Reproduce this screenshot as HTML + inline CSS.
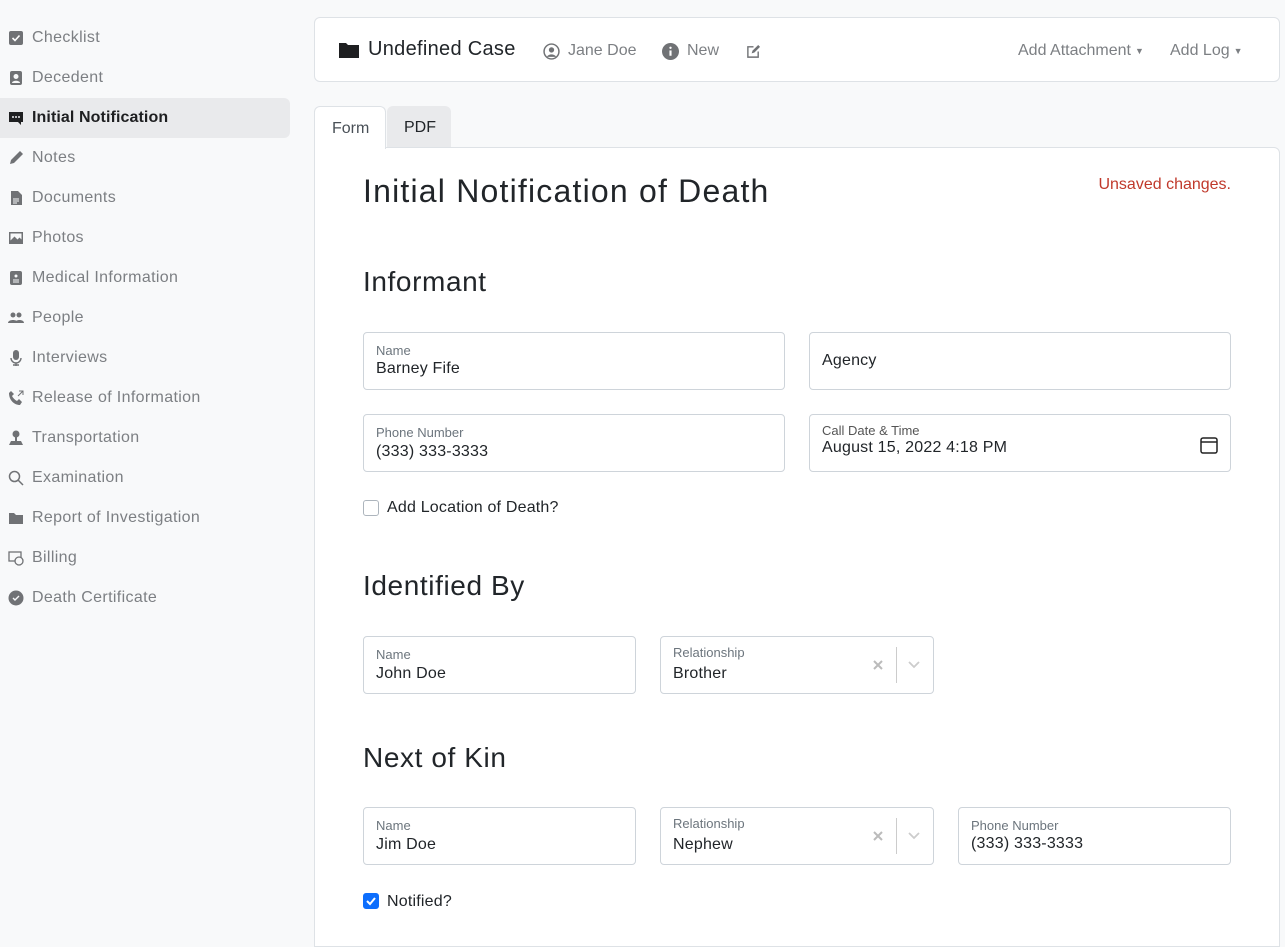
<!DOCTYPE html>
<html><head><style>
*{box-sizing:border-box;margin:0;padding:0}
body{width:1285px;height:930px;overflow:hidden;background:#f8f9fa;font-family:"Liberation Sans",sans-serif;position:relative;color:#212529}
.side{position:absolute;left:0;top:18px;width:290px}
.it{height:40px;display:flex;align-items:center;padding-left:8px;font-size:16px;color:#7c7f83;border-radius:0 6px 6px 0;letter-spacing:0.35px}
.it.act{background:#e9eaec;color:#1e1f21;font-weight:bold;letter-spacing:0.1px}
.ic{width:16px;min-width:16px;height:16px;margin-right:8px;display:block;position:relative}
.ic svg{position:absolute;left:0;top:0;width:16px;height:16px;fill:#707275}
.act .ic svg{fill:#1e1f21}
.hdr{position:absolute;left:314px;top:17px;width:966px;height:65px;background:#fff;border:1px solid #dee2e6;border-radius:6px}
.hdr .t{position:absolute;left:24px;top:20px;font-size:20px;display:flex;align-items:center;letter-spacing:0.3px}
.g{position:absolute;top:24px;font-size:16px;color:#7c7f83;display:flex;align-items:center}
.tab{position:absolute;top:106px;height:42px;font-size:16px;padding:13px 17px;border-radius:6px 6px 0 0}
.card{position:absolute;left:314px;top:147px;width:966px;height:800px;background:#fff;border:1px solid #dee2e6;border-radius:0 6px 0 0}
.a{position:absolute}
h1{position:absolute;left:48px;top:25px;font-size:32px;font-weight:normal;letter-spacing:1.2px}
h2{position:absolute;left:48px;font-size:28px;font-weight:normal;letter-spacing:0.6px}
.f{position:absolute;height:58px;border:1px solid #ced4da;border-radius:4px;background:#fff}
.f .l{position:absolute;left:12px;top:10px;font-size:13px;color:#6c757d}
.f .v{position:absolute;left:12px;top:28px;font-size:16px;color:#212529;letter-spacing:0.2px}
.cb{position:absolute;left:48px;width:16px;height:16px;border:1px solid #adb5bd;border-radius:3px;background:#fff}
.cl{position:absolute;left:72px;font-size:16px;letter-spacing:0.2px}
.chev{position:absolute;left:247px;top:24px}
</style></head><body>
<div class="side">
<div class="it"><span class="ic"><svg viewBox="0 0 16 16"><rect x="1" y="1" width="14" height="14" rx="2"/><path d="M4.5 8l2.5 2.5 4.5-5" stroke="#fff" stroke-width="1.6" fill="none"/></svg></span>Checklist</div>
<div class="it"><span class="ic"><svg viewBox="0 0 16 16"><rect x="2" y="1" width="12" height="14" rx="2"/><circle cx="8" cy="6.5" r="2.5" fill="#f8f9fa"/><path d="M4 13c0-3 8-3 8 0z" fill="#f8f9fa"/></svg></span>Decedent</div>
<div class="it act"><span class="ic"><svg viewBox="0 0 16 16"><path d="M1 2h14v10h-2v3l-3-3H1z"/><circle cx="5" cy="7" r="1" fill="#e9eaec"/><circle cx="8" cy="7" r="1" fill="#e9eaec"/><circle cx="11" cy="7" r="1" fill="#e9eaec"/></svg></span>Initial Notification</div>
<div class="it"><span class="ic"><svg viewBox="0 0 16 16"><path d="M12 1l3 3-9 9-4 1 1-4z"/></svg></span>Notes</div>
<div class="it"><span class="ic"><svg viewBox="0 0 16 16"><path d="M3 1h7l4 4v10H3z"/><path d="M5 9h6M5 11h6M5 13h4" stroke="#f8f9fa"/></svg></span>Documents</div>
<div class="it"><span class="ic"><svg viewBox="0 0 16 16"><path d="M1 2h14v12H1z M2.5 3.5v7l4-4 3 3 2-2 2 2v-6z" fill-rule="evenodd"/></svg></span>Photos</div>
<div class="it"><span class="ic"><svg viewBox="0 0 16 16"><rect x="2" y="1" width="12" height="14" rx="2"/><path d="M5 10h6M5 12h6" stroke="#f8f9fa"/><circle cx="8" cy="6" r="1.5" fill="#f8f9fa"/></svg></span>Medical Information</div>
<div class="it"><span class="ic"><svg viewBox="0 0 16 16"><circle cx="5" cy="5" r="2.5"/><circle cx="11" cy="5" r="2.5"/><path d="M0 13c0-4 10-4 10 0zM7 13c0-4 9-4 9 0z"/></svg></span>People</div>
<div class="it"><span class="ic"><svg viewBox="0 0 16 16"><rect x="5" y="0" width="6" height="10" rx="3"/><path d="M3 8a5 5 0 0010 0M8 13v3M5 15h6" stroke="#707275" fill="none" stroke-width="1.4"/></svg></span>Interviews</div>
<div class="it"><span class="ic"><svg viewBox="0 0 16 16"><path d="M3 1l3 3-2 2c1 2 3 4 5 5l2-2 3 3-2 3C6 15 1 10 1 3z"/><path d="M10 6l5-5M11 1h4v4" stroke="#707275" fill="none"/></svg></span>Release of Information</div>
<div class="it"><span class="ic"><svg viewBox="0 0 16 16"><circle cx="8" cy="4" r="3.5"/><path d="M7 7h2v5H7zM1 15l2-4h10l2 4z" /></svg></span>Transportation</div>
<div class="it"><span class="ic"><svg viewBox="0 0 16 16"><circle cx="6.5" cy="6.5" r="5" stroke="#707275" stroke-width="1.5" fill="none"/><path d="M10 10l5 5" stroke="#707275" stroke-width="1.5"/></svg></span>Examination</div>
<div class="it"><span class="ic"><svg viewBox="0 0 16 16"><path d="M1 3h5l2 2h7v9H1z"/></svg></span>Report of Investigation</div>
<div class="it"><span class="ic"><svg viewBox="0 0 16 16"><rect x="1" y="2" width="12" height="9" fill="none" stroke="#707275" stroke-width="1.3"/><circle cx="11" cy="11" r="4" fill="#f8f9fa" stroke="#707275" stroke-width="1.3"/></svg></span>Billing</div>
<div class="it"><span class="ic"><svg viewBox="0 0 16 16"><circle cx="8" cy="8" r="7.5"/><path d="M5 8l2 2 4-4" stroke="#f8f9fa" stroke-width="1.4" fill="none"/></svg></span>Death Certificate</div>
</div>

<div class="hdr">
<div class="t"><svg width="20" height="16" viewBox="0 0 20 16" style="margin-right:9px"><path d="M0 1h7l2 2h11v13H0z" fill="#1e1f21"/></svg>Undefined Case</div>
<div class="g" style="left:228px"><svg width="17" height="17" viewBox="0 0 16 16" style="margin-right:8px"><circle cx="8" cy="8" r="7" fill="none" stroke="#707275" stroke-width="1.4"/><circle cx="8" cy="6.5" r="2.5" fill="#707275"/><path d="M3.5 13c2-3 7-3 9 0" fill="#707275"/></svg>Jane Doe</div>
<div class="g" style="left:347px"><svg width="17" height="17" viewBox="0 0 16 16" style="margin-right:8px"><circle cx="8" cy="8" r="8" fill="#707275"/><rect x="7" y="7" width="2" height="5" fill="#fff"/><circle cx="8" cy="4.5" r="1.1" fill="#fff"/></svg>New</div>
<div class="g" style="left:431px;top:26px"><svg width="15" height="15" viewBox="0 0 16 16"><path d="M13 8v6H2V3h6" fill="none" stroke="#707275" stroke-width="1.5"/><path d="M6 10l1-3 6-6 2 2-6 6z" fill="#707275"/></svg></div>
<div class="g" style="left:703px">Add Attachment <span style="font-size:9px;margin-left:4px">▼</span></div>
<div class="g" style="left:855px">Add Log <span style="font-size:9px;margin-left:4px">▼</span></div>
</div>

<div class="tab" style="left:314px;width:72px;background:#fff;border:1px solid #dee2e6;border-bottom:none;color:#495057;z-index:2;height:43px">Form</div>
<div class="tab" style="left:387px;width:64px;background:#e9eaec;color:#212529">PDF</div>

<div class="card">
<h1>Initial Notification of Death</h1>
<div class="a" style="right:48px;top:28px;color:#c0392b;font-size:16px">Unsaved changes.</div>
<h2 style="top:118px">Informant</h2>
<div class="f" style="left:48px;top:184px;width:422px"><div class="l">Name</div><div class="v" style="top:27px">Barney Fife</div></div>
<div class="f" style="left:494px;top:184px;width:422px"><div class="v" style="top:19px">Agency</div></div>
<div class="f" style="left:48px;top:266px;width:422px"><div class="l">Phone Number</div><div class="v">(333) 333-3333</div></div>
<div class="f" style="left:494px;top:266px;width:422px"><div class="l" style="top:8px;color:#555">Call Date &amp; Time</div><div class="v" style="top:24px">August 15, 2022 4:18 PM</div>
<svg class="a" style="right:12px;top:21px" width="18" height="18" viewBox="0 0 18 18"><rect x="1" y="2" width="16" height="15" rx="2" fill="none" stroke="#222" stroke-width="1.5"/><path d="M1 6h16" stroke="#222" stroke-width="1.5"/></svg></div>
<div class="cb" style="top:352px"></div><div class="cl" style="top:351px">Add Location of Death?</div>
<h2 style="top:422px">Identified By</h2>
<div class="f" style="left:48px;top:488px;width:273px"><div class="l">Name</div><div class="v">John Doe</div></div>
<div class="f" style="left:345px;top:488px;width:274px"><div class="l" style="top:8px">Relationship</div><div class="v" style="top:28px">Brother</div>
<svg class="a" style="left:212px;top:23px" width="10" height="10"><path d="M1 1l8 8M9 1l-8 8" stroke="#bbb" stroke-width="2"/></svg><div class="a" style="left:235px;top:10px;width:1px;height:36px;background:#ccc"></div><svg class="chev" width="12" height="8"><path d="M1 1l5 5 5-5" stroke="#ccc" stroke-width="1.8" fill="none"/></svg></div>
<h2 style="top:594px">Next of Kin</h2>
<div class="f" style="left:48px;top:659px;width:273px"><div class="l">Name</div><div class="v">Jim Doe</div></div>
<div class="f" style="left:345px;top:659px;width:274px"><div class="l" style="top:8px">Relationship</div><div class="v" style="top:28px">Nephew</div>
<svg class="a" style="left:212px;top:23px" width="10" height="10"><path d="M1 1l8 8M9 1l-8 8" stroke="#bbb" stroke-width="2"/></svg><div class="a" style="left:235px;top:10px;width:1px;height:36px;background:#ccc"></div><svg class="chev" width="12" height="8"><path d="M1 1l5 5 5-5" stroke="#ccc" stroke-width="1.8" fill="none"/></svg></div>
<div class="f" style="left:643px;top:659px;width:273px"><div class="l">Phone Number</div><div class="v" style="top:27px">(333) 333-3333</div></div>
<div class="cb" style="top:745px;background:#0d6efd;border-color:#0d6efd"><svg width="14" height="14" viewBox="0 0 14 14" style="position:absolute;left:0;top:0"><path d="M3 7l3 3 5-6" stroke="#fff" stroke-width="2" fill="none"/></svg></div><div class="cl" style="top:745px">Notified?</div>
</div>
</body></html>
